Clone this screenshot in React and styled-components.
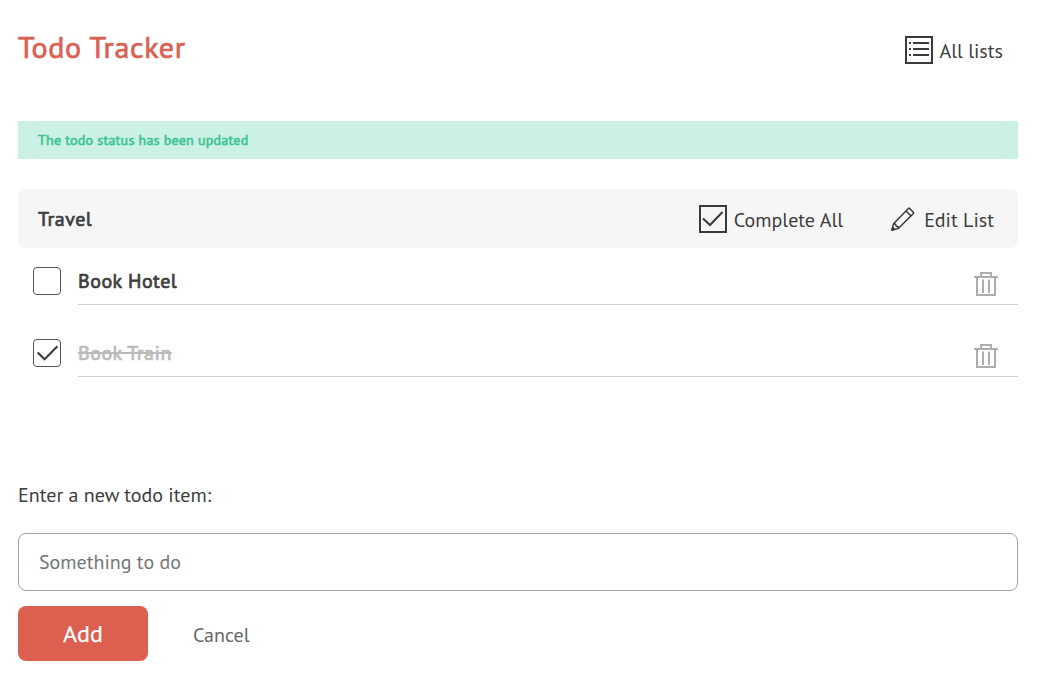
import React from "react";
import styled, { createGlobalStyle, css } from "styled-components";

const GlobalStyle = createGlobalStyle`
  * { box-sizing: border-box; }
  body {
    margin: 0;
    background: #fff;
    color: #3d3d3d;
    font-family: "PT Sans", "Noto Sans", "Open Sans", sans-serif;
    font-size: 20px;
  }
`;

const Page = styled.main`
  width: 1000px;
  margin-left: 18px;
`;

const Header = styled.header`
  display: flex;
  justify-content: space-between;
  align-items: center;
  height: 99px;
  padding-right: 15px;
`;

const thickened = css`
  font-weight: 400;
  -webkit-text-stroke: 0.7px currentColor;
`;

const Title = styled.h1`
  ${thickened}
  margin: 0 0 6px;
  color: #da6051;
  font-size: 30px;
  line-height: 36px;
  letter-spacing: 0.65px;
  white-space: nowrap;
`;

const Action = styled.a`
  display: flex;
  align-items: center;
  gap: ${(p) => p.$gap || 7}px;
  height: 28px;
  line-height: 28px;
  white-space: nowrap;
  svg { display: block; flex: none; }
`;

const ActionLabel = styled.span`
  padding-top: 2px;
`;

const Flash = styled.div`
  ${thickened}
  -webkit-text-stroke-width: 0.6px;
  height: 38px;
  margin-top: 22px;
  padding-left: 20px;
  background: #cbf1e4;
  color: #3cc495;
  font-size: 14px;
  line-height: 39px;
  letter-spacing: 0.24px;
`;

const ListHeader = styled.section`
  display: flex;
  align-items: center;
  justify-content: space-between;
  height: 59px;
  margin-top: 30px;
  padding: 0 24px 0 20px;
  border-radius: 8px;
  background: #f6f6f6;
`;

const ListTitle = styled.h2`
  ${thickened}
  margin: 0;
  font-size: 20px;
  line-height: 28px;
  letter-spacing: 0.5px;
`;

const Actions = styled.nav`
  display: flex;
  gap: 47px;
`;

const Items = styled.ul`
  list-style: none;
  margin: 0;
  padding: 0;
`;

const Item = styled.li`
  display: flex;
  height: ${(p) => (p.$last ? 57 : 72)}px;
  padding-left: 15px;
`;

const Checkbox = styled.button`
  display: flex;
  align-items: center;
  justify-content: center;
  flex: none;
  width: 28px;
  height: 28px;
  margin: 19px 17px 0 0;
  padding: 0;
  border: 1px solid #555;
  border-radius: 4px;
  background: #fff;
`;

const ItemBody = styled.div`
  display: flex;
  justify-content: space-between;
  flex: 1;
  height: 57px;
  padding: 18px 20px 0 0;
  border-bottom: 1px solid #d0d0d0;
`;

const ItemName = styled.h3`
  ${thickened}
  margin: 0;
  font-size: 20px;
  line-height: 31px;
  letter-spacing: 0.5px;
  white-space: nowrap;
  ${(p) =>
    p.$done &&
    css`
      color: #bbb;
      text-decoration: line-through;
    `}
`;

const Form = styled.form`
  display: flex;
  flex-direction: column;
  margin-top: 104px;
`;

const Label = styled.label`
  line-height: 28px;
`;

const Input = styled.input`
  width: 100%;
  height: 58px;
  margin-top: 24px;
  padding: 0 20px;
  border: 1px solid #a0a0a0;
  border-radius: 8px;
  background: #fff;
  font: inherit;
  &::placeholder { color: #757575; opacity: 1; }
`;

const Buttons = styled.div`
  display: flex;
  align-items: center;
  gap: 45px;
  margin-top: 15px;
`;

const AddButton = styled.button`
  width: 130px;
  height: 55px;
  padding: 0;
  border: 0;
  border-radius: 8px;
  background: #dc5f50;
  color: #fff;
  font: inherit;
  font-size: 24px;
  line-height: 55px;
  -webkit-text-stroke: 0.25px currentColor;
`;

const Cancel = styled.a`
  margin-top: 2px;
  color: #666;
  line-height: 28px;
`;

const ListIcon = () => (
  <svg width="28" height="28" viewBox="0 0 28 28" fill="none" stroke="#3a3a3c">
    <rect x="1" y="1" width="26" height="26" strokeWidth="2" />
    <path d="M8 7h16M8 13h16M8 19h16" strokeWidth="2" />
    <path d="M4 7h2M4 13h2M4 19h2" strokeWidth="2" />
  </svg>
);

const CheckSquareIcon = () => (
  <svg width="28" height="28" viewBox="0 0 28 28" fill="none" stroke="#3a3a3c" strokeWidth="2">
    <rect x="1" y="1" width="26" height="26" />
    <path d="M4 13.5L11 20L23.5 7" />
  </svg>
);

const CheckIcon = () => (
  <svg width="26" height="26" viewBox="0 0 26 26" fill="none" stroke="#3a3a3c" strokeWidth="2">
    <path d="M3.7 12.5L10.6 19.3L23.4 6.3" />
  </svg>
);

const PencilIcon = () => (
  <svg width="26" height="28" viewBox="0 0 26 28" fill="none" stroke="#333" strokeWidth="1.4" strokeLinejoin="round">
    <path d="M2 25L3.5 18.7L18.4 3.4Q19 2.8 19.6 3.4L23.4 7.2Q24 7.8 23.4 8.4L8.3 23.6Z" />
    <path d="M16 6L20.8 10.8M3.5 18.7L5.7 19.3L6.2 21.3L8.1 21.8L8.3 23.6" />
    <path d="M2 25L2.7 22.4L4.6 24.3Z" fill="#333" />
  </svg>
);

const TrashIcon = () => (
  <svg width="24" height="25" viewBox="0 0 24 25" fill="none" stroke="#adadad" strokeWidth="2">
    <path d="M0 5H24M7 5V1H17V5M3 5V23H21V5M9 7.5V21M15 7.5V21" />
  </svg>
);

const TrashButton = styled.button`
  display: flex;
  width: 24px;
  height: 25px;
  margin-top: 6px;
  padding: 0;
  border: 0;
  background: none;
`;

const todos = [
  { name: "Book Hotel", done: false },
  { name: "Book Train", done: true },
];

export default function App() {
  return (
    <>
      <GlobalStyle />
      <Page>
        <Header>
          <Title>Todo Tracker</Title>
          <Action $gap={6.3}>
            <ListIcon />
            <ActionLabel>All lists</ActionLabel>
          </Action>
        </Header>
        <Flash>The todo status has been updated</Flash>
        <ListHeader>
          <ListTitle>Travel</ListTitle>
          <Actions>
            <Action>
              <CheckSquareIcon />
              <ActionLabel>Complete All</ActionLabel>
            </Action>
            <Action $gap={8}>
              <PencilIcon />
              <ActionLabel>Edit List</ActionLabel>
            </Action>
          </Actions>
        </ListHeader>
        <Items>
          {todos.map((todo, i) => (
            <Item key={todo.name} $last={i === todos.length - 1}>
              <Checkbox type="button" aria-label={todo.name}>
                {todo.done && <CheckIcon />}
              </Checkbox>
              <ItemBody>
                <ItemName $done={todo.done}>{todo.name}</ItemName>
                <TrashButton type="button" aria-label="Delete">
                  <TrashIcon />
                </TrashButton>
              </ItemBody>
            </Item>
          ))}
        </Items>
        <Form>
          <Label htmlFor="todo">Enter a new todo item:</Label>
          <Input id="todo" placeholder="Something to do" />
          <Buttons>
            <AddButton type="button">Add</AddButton>
            <Cancel>Cancel</Cancel>
          </Buttons>
        </Form>
      </Page>
    </>
  );
}
